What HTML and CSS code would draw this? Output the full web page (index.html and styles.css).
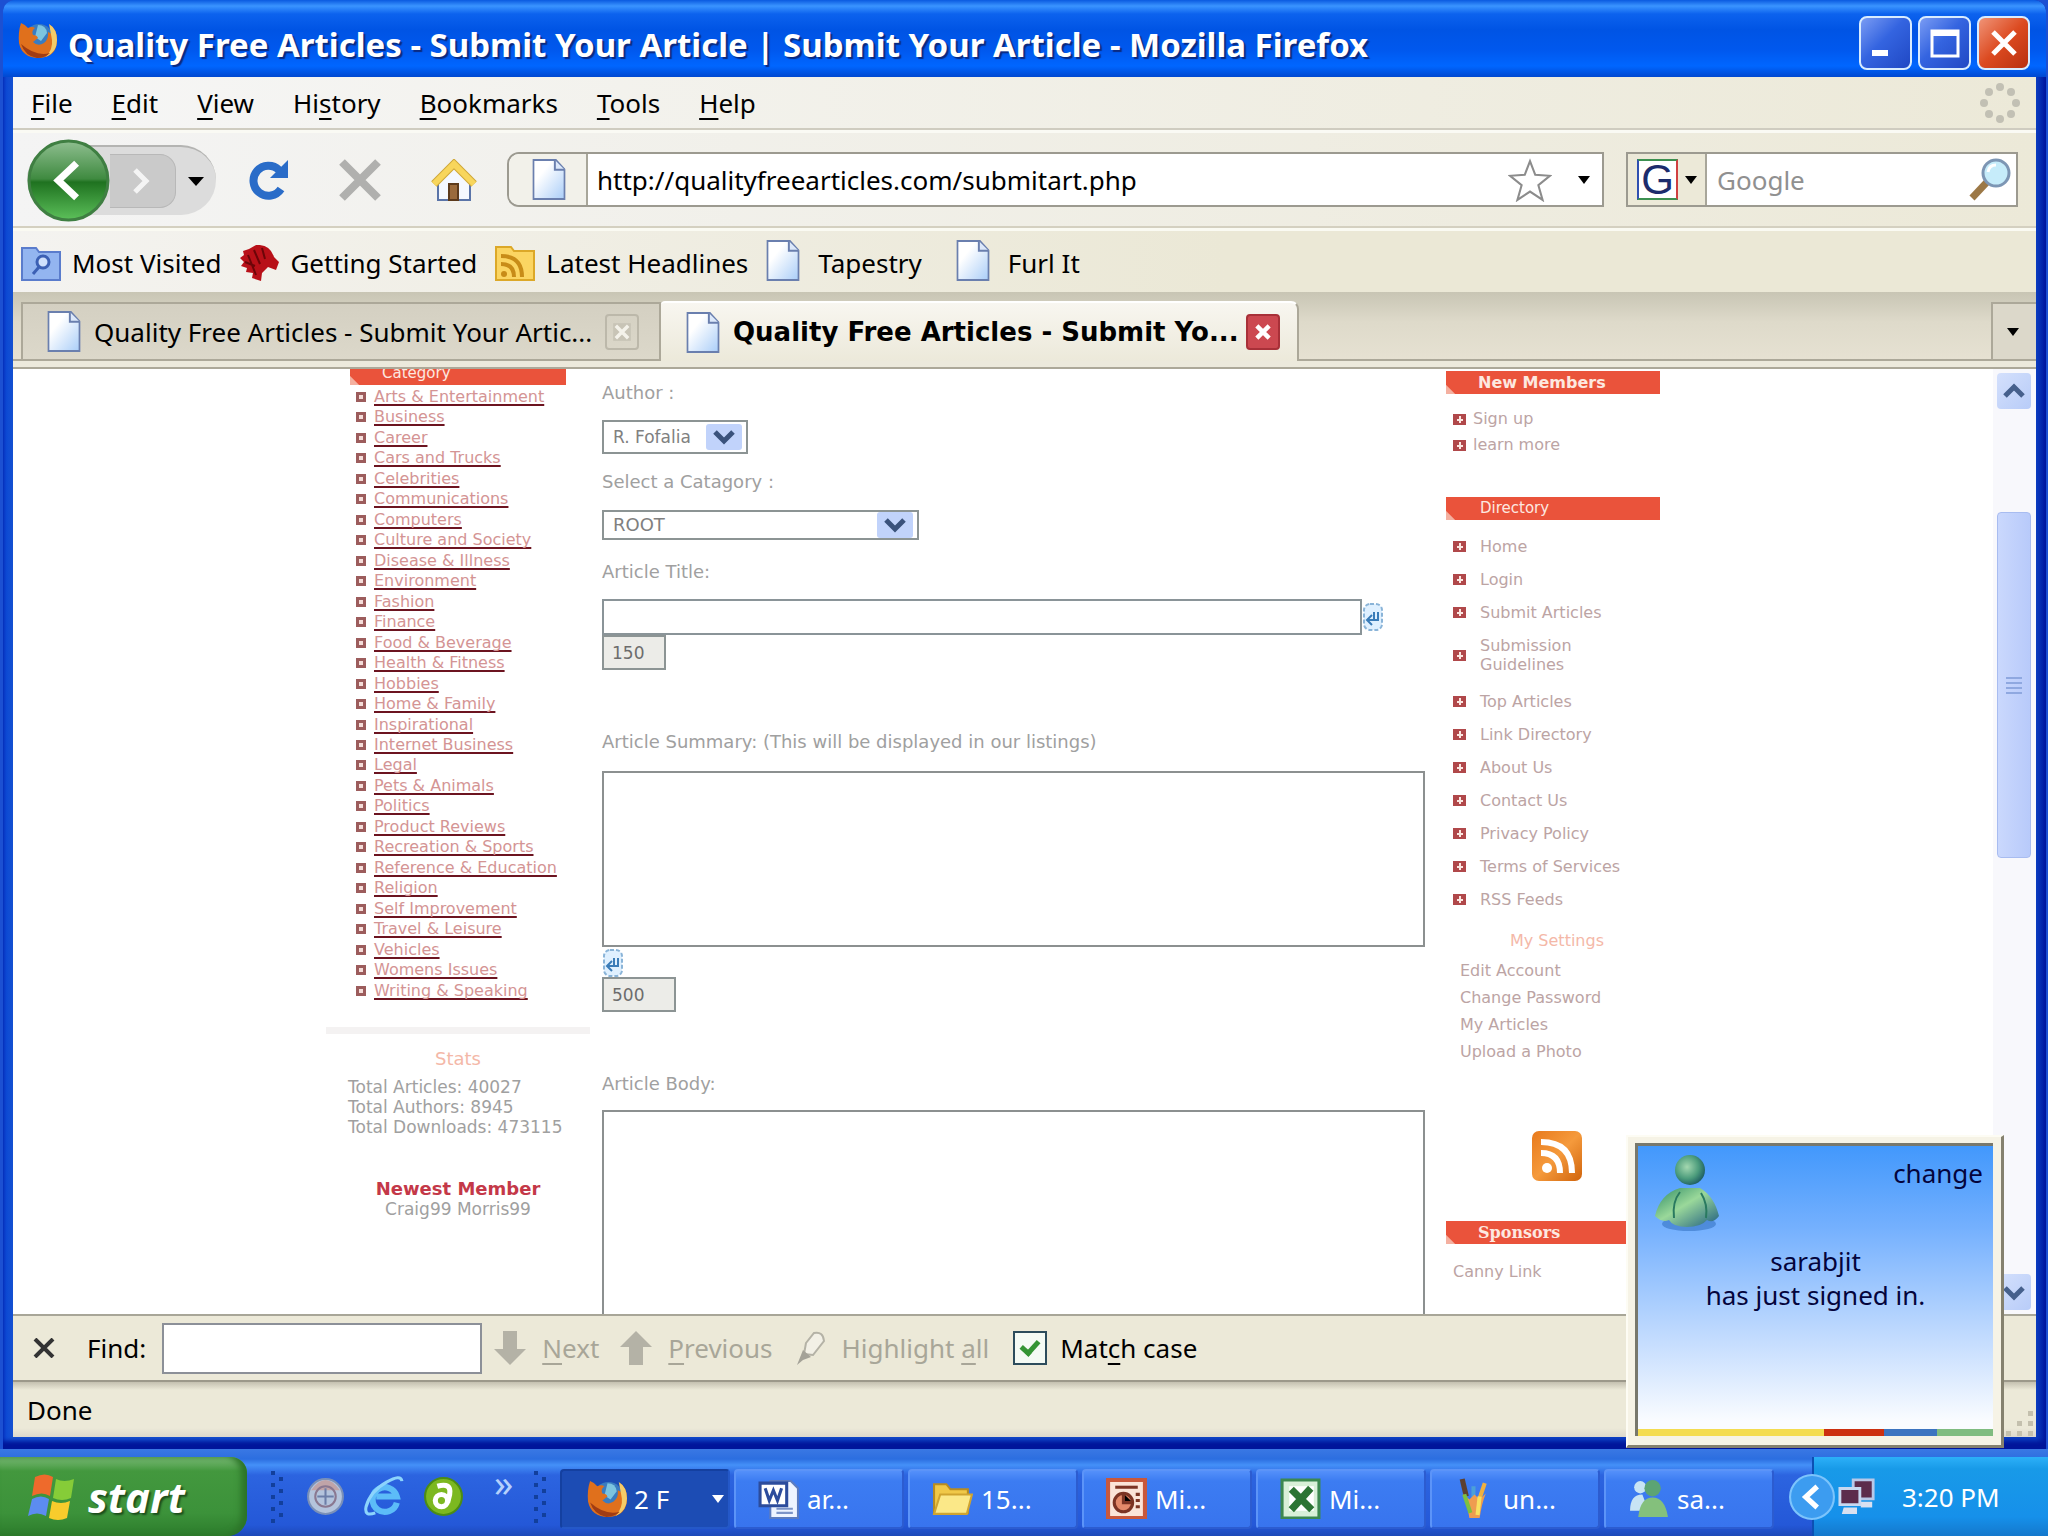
FILE: index.html
```html
<!DOCTYPE html>
<html lang="en">
<head>
    <meta charset="UTF-8">
    <meta name="viewport" content="width=device-width, initial-scale=1.0">
    <title>Quality Free Articles - Submit Your Article</title>
    <link rel="stylesheet" href="styles.css">
</head>
<body>

<!-- Shared icons -->
<svg class="defs" width="0" height="0">
    <defs>
        <linearGradient id="paper" x1="0" y1="0" x2="1" y2="1">
            <stop offset="0.3" stop-color="#fff"/><stop offset="1" stop-color="#a9cdf8"/>
        </linearGradient>
        <linearGradient id="green" x1="0" y1="0" x2="0" y2="1">
            <stop offset="0" stop-color="#8fbf90"/><stop offset="0.48" stop-color="#3f8a40"/>
            <stop offset="0.52" stop-color="#1f7220"/><stop offset="1" stop-color="#5cc05a"/>
        </linearGradient>
        <linearGradient id="orange" x1="0" y1="0" x2="1" y2="1">
            <stop offset="0" stop-color="#e87a1c"/><stop offset="0.5" stop-color="#f59a3c"/><stop offset="1" stop-color="#d0640c"/>
        </linearGradient>
        <linearGradient id="buddy" x1="0" y1="0" x2="1" y2="1">
            <stop offset="0" stop-color="#2c8a64"/><stop offset="0.45" stop-color="#9ad89a"/><stop offset="1" stop-color="#1c5a80"/>
        </linearGradient>
        <radialGradient id="head" cx="0.4" cy="0.4" r="0.65">
            <stop offset="0" stop-color="#a4d8b0"/><stop offset="0.6" stop-color="#4c9c7c"/><stop offset="1" stop-color="#1c5a60"/>
        </radialGradient>
        <symbol id="page" viewBox="0 0 34 42">
            <path d="M1 1h23l9 10v30H1z" fill="url(#paper)" stroke="#6a7fae" stroke-width="2"/>
            <path d="M23 1v10h10" fill="#dce8fa" stroke="#6a7fae" stroke-width="2"/>
        </symbol>
        <symbol id="fox" viewBox="0 0 40 40">
            <circle cx="21" cy="18" r="14" fill="#3a7cc0"/>
            <path d="M20 5q8 0 9 8l-6 8-6-4z" fill="#7cc4e0"/>
            <path d="M3 3q5 2 7 5 4-2 7 0-4 3-2 7 4 0 5 3l-5 4q5 5 11 1 5-4 4-11l4 2q1-6-3-10 8 5 8 16 0 17-18 18Q4 38 1 23 0 12 3 3z" fill="#e0701c"/>
            <path d="M31 4q8 5 8 16 0 12-11 17 7-8 6-17-1-6-3-16z" fill="#f4cc68"/>
            <path d="M3 24q4 12 16 14 8 0 13-5-14 4-29-9z" fill="#a03c14"/>
        </symbol>
        <symbol id="plus" viewBox="0 0 13 11">
            <path d="M0 0h13v11H0z" fill="#b0484a"/>
            <path d="M6 2h2v7H6zM4 5h6v2H4z" fill="#fbe6e0"/>
        </symbol>
        <symbol id="chevron" viewBox="0 0 36 26">
            <rect width="36" height="26" rx="3" fill="#c1d3fb"/>
            <path d="M9 8l9 9 9-9" fill="none" stroke="#3a527c" stroke-width="5"/>
        </symbol>
        <symbol id="enter" viewBox="0 0 20 28">
            <rect x="1" y="1" width="18" height="26" rx="6" fill="#dff0ff" stroke="#8ab4d8" stroke-width="2" stroke-dasharray="4 2"/>
            <path d="M15 9v8H5m4-5l-5 5 5 5M11 9v7" fill="none" stroke="#3a7cb8" stroke-width="2"/>
        </symbol>
        <symbol id="person" viewBox="0 0 66 78">
            <ellipse cx="35" cy="70" rx="27" ry="7" fill="#2a68b8" opacity="0.5"/>
            <path d="M1 62Q6 40 26 34h20q14 8 19 28-6 8-12 4-6 7-20 7t-18-7Q8 69 1 62z" fill="url(#buddy)"/>
            <circle cx="36" cy="16" r="15" fill="url(#head)"/>
            <path d="M20 64q-2-16 6-26M52 64q2-14-5-25" fill="none" stroke="#2a7a60" stroke-width="2"/>
        </symbol>
        <symbol id="grip" viewBox="0 0 16 54">
            <g fill="#123f9c">
                <path d="M2 1h4v4H2zM2 13h4v4H2zM2 25h4v4H2zM2 37h4v4H2zM2 49h4v4H2z"/>
                <path d="M10 7h4v4h-4zM10 19h4v4h-4zM10 31h4v4h-4zM10 43h4v4h-4z"/>
            </g>
        </symbol>
    </defs>
</svg>

<div class="window">
    <header class="titlebar">
        <svg class="title-icon" viewBox="0 0 40 40"><use href="#fox"/></svg>
        <h1>Quality Free Articles - Submit Your Article | Submit Your Article - Mozilla Firefox</h1>
        <div class="window-buttons">
            <button type="button" aria-label="Minimize"><svg viewBox="0 0 40 40"><path d="M6 27h16v6H6z" fill="#fff"/></svg></button>
            <button type="button" aria-label="Maximize"><svg viewBox="0 0 40 40"><path d="M7 8h26v25H7z" fill="none" stroke="#fff" stroke-width="3"/><path d="M6 7h28v6H6z" fill="#fff"/></svg></button>
            <button type="button" class="close" aria-label="Close"><svg viewBox="0 0 40 40"><path d="M9 9l22 22M31 9L9 31" stroke="#fff" stroke-width="5"/></svg></button>
        </div>
    </header>

    <div class="client">
        <nav class="menubar">
            <a href="#"><u>F</u>ile</a>
            <a href="#"><u>E</u>dit</a>
            <a href="#"><u>V</u>iew</a>
            <a href="#">Hi<u>s</u>tory</a>
            <a href="#"><u>B</u>ookmarks</a>
            <a href="#"><u>T</u>ools</a>
            <a href="#"><u>H</u>elp</a>
            <svg class="throbber" viewBox="0 0 40 40">
                <g fill="#c2c0b4">
                    <circle cx="20" cy="4" r="4"/><circle cx="31" cy="9" r="4"/><circle cx="36" cy="20" r="4"/><circle cx="31" cy="31" r="4"/>
                    <circle cx="20" cy="36" r="4"/><circle cx="9" cy="31" r="4"/><circle cx="4" cy="20" r="4"/><circle cx="9" cy="9" r="4"/>
                </g>
            </svg>
        </nav>

        <div class="toolbar">
            <div class="history">
                <button type="button" class="back" aria-label="Back">
                    <svg viewBox="0 0 82 82">
                        <circle cx="41" cy="41" r="39" fill="url(#green)" stroke="#3f7f42" stroke-width="3"/>
                        <path d="M49 24L31 41l18 17" fill="none" stroke="#fff" stroke-width="7"/>
                    </svg>
                </button>
                <button type="button" class="forward" aria-label="Forward">
                    <svg viewBox="0 0 26 30"><path d="M7 4l11 11L7 26" fill="none" stroke="#f4f4f4" stroke-width="5"/></svg>
                </button>
                <button type="button" class="drop" aria-label="Recent pages"><svg viewBox="0 0 16 10"><path d="M0 1h16L8 10z"/></svg></button>
            </div>
            <button type="button" class="tool" aria-label="Reload">
                <svg viewBox="0 0 42 42"><path d="M34 30a15 15 0 1 1-2-19" fill="none" stroke="#2a6cc8" stroke-width="8"/><path d="M41 1v18H23z" fill="#2a6cc8"/></svg>
            </button>
            <button type="button" class="tool" aria-label="Stop">
                <svg viewBox="0 0 42 42"><path d="M3 3l36 36M39 3L3 39" stroke="#b0b0ae" stroke-width="8"/></svg>
            </button>
            <button type="button" class="tool home" aria-label="Home">
                <svg viewBox="0 0 46 42">
                    <path d="M7 20L23 7l16 13v21H7z" fill="#f4f8ff" stroke="#5a74a8" stroke-width="2"/>
                    <path d="M18 25h9v16h-9z" fill="#9a6a3c" stroke="#5c3a1c" stroke-width="2"/>
                    <path d="M3 25L23 5l20 20" fill="none" stroke="#d0a838" stroke-width="8"/>
                    <path d="M3 25L23 5l20 20" fill="none" stroke="#f8d65c" stroke-width="6"/>
                </svg>
            </button>
            <form class="address">
                <span class="site-icon"><svg class="page-icon" viewBox="0 0 34 42"><use href="#page"/></svg></span>
                <input type="text" aria-label="Address" value="http://qualityfreearticles.com/submitart.php">
                <svg class="star" viewBox="0 0 42 42"><path d="M21 3l5 13 14 1-11 9 4 14-12-8-12 8 4-14L2 17l14-1z" fill="#fff" stroke="#8c8c8c" stroke-width="2"/></svg>
                <button type="button" class="drop" aria-label="Show history"><svg viewBox="0 0 16 10"><path d="M2 1h12L8 9z"/></svg></button>
            </form>
            <form class="search">
                <button type="button" class="engine" aria-label="Search engine">
                    <span class="g-logo">G</span>
                    <svg viewBox="0 0 16 10"><path d="M2 1h12L8 9z"/></svg>
                </button>
                <input type="text" aria-label="Search" placeholder="Google">
                <svg class="lens" viewBox="0 0 44 44">
                    <path d="M4 40l15-16" stroke="#9c7846" stroke-width="7"/>
                    <circle cx="28" cy="15" r="13" fill="#c6ecfa" stroke="#7d96b4" stroke-width="3"/>
                    <path d="M20 14q1-7 8-7" fill="none" stroke="#fff" stroke-width="3"/>
                </svg>
            </form>
        </div>

        <nav class="bookmarks">
            <a href="#">
                <svg class="folder" viewBox="0 0 40 36"><path d="M1 35V3h14l3 4h21v28z" fill="#93b5f0" stroke="#5a7ccc" stroke-width="2"/><circle cx="22" cy="17" r="6" fill="#cfe0fc" stroke="#3c60b4" stroke-width="3"/><path d="M18 22l-6 7" stroke="#3c60b4" stroke-width="3"/></svg>
                Most Visited
            </a>
            <a href="#">
                <svg class="folder" viewBox="0 0 40 36"><path d="M17 0q14-1 18 12l5 5-3 8-8-3-6 6-1 8-9-3 1-5-7-1 1-4-6-2 3-4-4-4 4-3-1-4 6-2z" fill="#b81018"/><path d="M9 10l8 20M15 5l6 14M6 17l10 4M23 3l3 11" stroke="#6c0508" stroke-width="2"/></svg>
                Getting Started
            </a>
            <a href="#">
                <svg class="folder" viewBox="0 0 40 36"><path d="M1 35V2h15l3 4h20v29z" fill="#fbd562" stroke="#dca828" stroke-width="2"/><circle cx="9" cy="29" r="3" fill="#c88c18"/><path d="M6 19q13 0 13 13M6 11q21 0 21 21" fill="none" stroke="#c88c18" stroke-width="4"/></svg>
                Latest Headlines
            </a>
            <a href="#" class="plain"><svg class="page-icon" viewBox="0 0 34 42"><use href="#page"/></svg>Tapestry</a>
            <a href="#" class="plain"><svg class="page-icon" viewBox="0 0 34 42"><use href="#page"/></svg>Furl It</a>
        </nav>

        <div class="tabs">
            <div class="tab">
                <svg class="page-icon" viewBox="0 0 34 42"><use href="#page"/></svg>
                <span>Quality Free Articles - Submit Your Artic...</span>
                <button type="button" class="tab-close" aria-label="Close tab"><svg viewBox="0 0 34 34"><path d="M7 7h20v20H7z" fill="#c8c4b6"/><path d="M10 10l14 14M24 10L10 24" stroke="#f4f2ea" stroke-width="4"/></svg></button>
            </div>
            <div class="tab active">
                <svg class="page-icon" viewBox="0 0 34 42"><use href="#page"/></svg>
                <span>Quality Free Articles - Submit Yo...</span>
                <button type="button" class="tab-close" aria-label="Close tab"><svg viewBox="0 0 34 34"><path d="M10 10l14 14M24 10L10 24" stroke="#fff" stroke-width="5"/></svg></button>
            </div>
            <button type="button" class="tab-list" aria-label="List all tabs"><svg viewBox="0 0 16 10"><path d="M2 1h12L8 9z"/></svg></button>
        </div>
        <div class="tab-edge"></div>

        <div class="viewport">
            <main class="site">
                <aside class="left">
                    <h2 class="bar">Category</h2>
                    <ul class="categories">
                        <li><a href="#">Arts &amp; Entertainment</a></li>
                        <li><a href="#">Business</a></li>
                        <li><a href="#">Career</a></li>
                        <li><a href="#">Cars and Trucks</a></li>
                        <li><a href="#">Celebrities</a></li>
                        <li><a href="#">Communications</a></li>
                        <li><a href="#">Computers</a></li>
                        <li><a href="#">Culture and Society</a></li>
                        <li><a href="#">Disease &amp; Illness</a></li>
                        <li><a href="#">Environment</a></li>
                        <li><a href="#">Fashion</a></li>
                        <li><a href="#">Finance</a></li>
                        <li><a href="#">Food &amp; Beverage</a></li>
                        <li><a href="#">Health &amp; Fitness</a></li>
                        <li><a href="#">Hobbies</a></li>
                        <li><a href="#">Home &amp; Family</a></li>
                        <li><a href="#">Inspirational</a></li>
                        <li><a href="#">Internet Business</a></li>
                        <li><a href="#">Legal</a></li>
                        <li><a href="#">Pets &amp; Animals</a></li>
                        <li><a href="#">Politics</a></li>
                        <li><a href="#">Product Reviews</a></li>
                        <li><a href="#">Recreation &amp; Sports</a></li>
                        <li><a href="#">Reference &amp; Education</a></li>
                        <li><a href="#">Religion</a></li>
                        <li><a href="#">Self Improvement</a></li>
                        <li><a href="#">Travel &amp; Leisure</a></li>
                        <li><a href="#">Vehicles</a></li>
                        <li><a href="#">Womens Issues</a></li>
                        <li><a href="#">Writing &amp; Speaking</a></li>
                    </ul>
                    <div class="divider"></div>
                    <h3 class="soft-title">Stats</h3>
                    <p class="stats">Total Articles: 40027<br>Total Authors: 8945<br>Total Downloads: 473115</p>
                    <p class="newest"><strong>Newest Member</strong><br>Craig99 Morris99</p>
                </aside>

                <form class="article">
                    <label for="author">Author :</label>
                    <div class="select author">
                        <select id="author"><option>R. Fofalia</option></select>
                        <svg viewBox="0 0 36 26"><use href="#chevron"/></svg>
                    </div>
                    <label for="category">Select a Catagory :</label>
                    <div class="select category">
                        <select id="category"><option>ROOT</option></select>
                        <svg viewBox="0 0 36 26"><use href="#chevron"/></svg>
                    </div>
                    <label for="title">Article Title:</label>
                    <div class="title-row">
                        <input type="text" id="title">
                        <svg class="enter" viewBox="0 0 20 28"><use href="#enter"/></svg>
                    </div>
                    <input type="text" class="count" aria-label="Title characters left" value="150" readonly>
                    <label for="summary" class="gap">Article Summary: (This will be displayed in our listings)</label>
                    <textarea id="summary" class="summary"></textarea>
                    <svg class="enter" viewBox="0 0 20 28"><use href="#enter"/></svg>
                    <input type="text" class="count wide" aria-label="Summary characters left" value="500" readonly>
                    <label for="body" class="gap">Article Body:</label>
                    <textarea id="body" class="body"></textarea>
                </form>

                <aside class="right">
                    <h2 class="bar">New Members</h2>
                    <ul class="join">
                        <li><svg viewBox="0 0 13 11"><use href="#plus"/></svg><a href="#">Sign up</a></li>
                        <li><svg viewBox="0 0 13 11"><use href="#plus"/></svg><a href="#">learn more</a></li>
                    </ul>
                    <h2 class="bar thin">Directory</h2>
                    <ul class="directory">
                        <li><svg viewBox="0 0 13 11"><use href="#plus"/></svg><a href="#">Home</a></li>
                        <li><svg viewBox="0 0 13 11"><use href="#plus"/></svg><a href="#">Login</a></li>
                        <li><svg viewBox="0 0 13 11"><use href="#plus"/></svg><a href="#">Submit Articles</a></li>
                        <li class="two-line"><svg viewBox="0 0 13 11"><use href="#plus"/></svg><a href="#">Submission<br>Guidelines</a></li>
                        <li><svg viewBox="0 0 13 11"><use href="#plus"/></svg><a href="#">Top Articles</a></li>
                        <li><svg viewBox="0 0 13 11"><use href="#plus"/></svg><a href="#">Link Directory</a></li>
                        <li><svg viewBox="0 0 13 11"><use href="#plus"/></svg><a href="#">About Us</a></li>
                        <li><svg viewBox="0 0 13 11"><use href="#plus"/></svg><a href="#">Contact Us</a></li>
                        <li><svg viewBox="0 0 13 11"><use href="#plus"/></svg><a href="#">Privacy Policy</a></li>
                        <li><svg viewBox="0 0 13 11"><use href="#plus"/></svg><a href="#">Terms of Services</a></li>
                        <li><svg viewBox="0 0 13 11"><use href="#plus"/></svg><a href="#">RSS Feeds</a></li>
                    </ul>
                    <h3 class="soft-title">My Settings</h3>
                    <ul class="settings">
                        <li><a href="#">Edit Account</a></li>
                        <li><a href="#">Change Password</a></li>
                        <li><a href="#">My Articles</a></li>
                        <li><a href="#">Upload a Photo</a></li>
                    </ul>
                    <a href="#" class="rss" aria-label="RSS">
                        <svg viewBox="0 0 50 50"><rect width="50" height="50" rx="7" fill="url(#orange)"/><circle cx="15" cy="37" r="5" fill="#fff"/><path d="M9 22q19 0 19 20M9 11q31 0 31 31" fill="none" stroke="#fff" stroke-width="6"/></svg>
                    </a>
                    <h2 class="bar serif">Sponsors</h2>
                    <a href="#" class="sponsor">Canny Link</a>
                </aside>
            </main>

            <div class="scrollbar">
                <button type="button" aria-label="Scroll up"><svg viewBox="0 0 34 34"><path d="M8 22l9-9 9 9" fill="none" stroke="#46608c" stroke-width="5"/></svg></button>
                <div class="track"><div class="thumb"><svg viewBox="0 0 16 18"><path d="M0 2h16M0 7h16M0 12h16M0 17h16" stroke="#8fa8e0" stroke-width="2"/></svg></div></div>
                <button type="button" aria-label="Scroll down"><svg viewBox="0 0 34 34"><path d="M8 13l9 9 9-9" fill="none" stroke="#46608c" stroke-width="5"/></svg></button>
            </div>
        </div>

        <form class="findbar">
            <button type="button" class="find-close" aria-label="Close find bar"><svg viewBox="0 0 20 20"><path d="M1 1l18 18M19 1L1 19" stroke="#333" stroke-width="4"/></svg></button>
            <label for="find">Find:</label>
            <input type="text" id="find">
            <button type="button" class="find-tool"><svg viewBox="0 0 32 34"><path d="M9 0h14v18h9L16 34 0 18h9z" fill="#b4b2a6"/></svg><span><u>N</u>ext</span></button>
            <button type="button" class="find-tool"><svg viewBox="0 0 32 34"><path d="M9 34h14V16h9L16 0 0 16h9z" fill="#b4b2a6"/></svg><span><u>P</u>revious</span></button>
            <button type="button" class="find-tool"><svg viewBox="0 0 32 34"><path d="M12 12L20 2q9-2 10 8L19 24l-9-1z" fill="#f2f0e6" stroke="#b4b2a6" stroke-width="2"/><path d="M9 19l8 7-8 3-6 5z" fill="#a4a298"/></svg><span>Highlight <u>a</u>ll</span></button>
            <input type="checkbox" id="matchcase" checked>
            <label for="matchcase">Mat<u>c</u>h case</label>
        </form>

        <footer class="statusbar">
            <span>Done</span>
            <svg viewBox="0 0 28 28"><path d="M22 2h5v5h-5zM11 12h5v5h-5zM22 12h5v5h-5zM0 22h5v5H0zM11 22h5v5h-5zM22 22h5v5h-5z" fill="#c4c0ae"/></svg>
        </footer>
    </div>
</div>

<div class="toast" role="status">
    <div class="toast-body">
        <div class="toast-top">
            <svg viewBox="0 0 66 78"><use href="#person"/></svg>
            <a href="#">change</a>
        </div>
        <p>sarabjit<br>has just signed in.</p>
        <div class="stripes"><i></i><i></i><i></i><i></i></div>
    </div>
</div>

<footer class="taskbar">
    <button type="button" class="start">
        <svg viewBox="0 0 48 46">
            <path d="M8 3q10-5 18 0l-3 19q-8-5-18 0z" fill="#ee6a2c"/>
            <path d="M29 5q8 4 18 0l-3 19q-9 4-18 0z" fill="#86cc38"/>
            <path d="M5 25q9-5 17 0l-3 17q-9-5-18 0z" fill="#5c8cf0"/>
            <path d="M25 27q9 4 18 0l-3 17q-9 4-18 0z" fill="#f8cc2c"/>
        </svg>
        start
    </button>
    <svg class="grip" viewBox="0 0 16 54"><use href="#grip"/></svg>
    <div class="quick">
        <a href="#" aria-label="Media"><svg viewBox="0 0 40 40"><circle cx="20" cy="20" r="17" fill="#b4c4dc" stroke="#7a90b8" stroke-width="2"/><path d="M6 14q14-20 28 0z" fill="#c0a4a8"/><circle cx="20" cy="20" r="10" fill="none" stroke="#8a7890" stroke-width="2"/><path d="M12 20h16M20 12v16" stroke="#6c7ea8" stroke-width="2"/></svg></a>
        <a href="#" aria-label="Internet Explorer"><svg viewBox="0 0 40 40"><path d="M32 26a12 12 0 1 1 0-6H12" fill="none" stroke="#5cbcf8" stroke-width="6"/><path d="M37 5Q36-2 22 6 6 15 2 30q-2 10 9 6" fill="none" stroke="#8cd4fc" stroke-width="3"/></svg></a>
        <a href="#" aria-label="Avant"><svg viewBox="0 0 40 40"><circle cx="20" cy="20" r="18" fill="#7cb820" stroke="#4c8c14" stroke-width="2"/><circle cx="18" cy="24" r="6" fill="none" stroke="#fff" stroke-width="5"/><path d="M14 10q14-4 12 8l-2 8" fill="none" stroke="#fff" stroke-width="5"/></svg></a>
    </div>
    <span class="more">»</span>
    <svg class="grip" viewBox="0 0 16 54"><use href="#grip"/></svg>
    <div class="tasks">
        <button type="button" class="pressed"><svg viewBox="0 0 40 40"><use href="#fox"/></svg><span>2 F</span><svg class="arrow" viewBox="0 0 12 8"><path d="M0 0h12L6 8z" fill="#fff"/></svg></button>
        <button type="button"><svg viewBox="0 0 40 40"><path d="M12 3h20l7 7v29H12z" fill="#eef4ff" stroke="#5c7cc0" stroke-width="2"/><path d="M18 30h16M18 34h16" stroke="#7c94c8" stroke-width="2"/><path d="M2 5h26v22H2z" fill="#fff" stroke="#2c4c9c" stroke-width="3"/><path d="M7 10l4 12 4-10 4 10 4-12" fill="none" stroke="#2c4c9c" stroke-width="3"/></svg><span>ar...</span></button>
        <button type="button"><svg viewBox="0 0 40 40"><path d="M2 34V6h12l4 5h17v23z" fill="#f0c848" stroke="#b88c20" stroke-width="2"/><path d="M8 16h31l-5 19H2z" fill="#fbe888" stroke="#d0a430" stroke-width="2"/></svg><span>15...</span></button>
        <button type="button"><svg viewBox="0 0 40 40"><path d="M2 2h36v37H2z" fill="#fbe4d8" stroke="#c8583c" stroke-width="4"/><path d="M9 9h22" stroke="#7c3424" stroke-width="3"/><circle cx="17" cy="24" r="9" fill="#e48a6a" stroke="#7c3424" stroke-width="3"/><path d="M17 15v9h9M29 16h4M29 22h4M29 28h4" stroke="#7c3424" stroke-width="3"/></svg><span>Mi...</span></button>
        <button type="button"><svg viewBox="0 0 40 40"><path d="M2 2h36v37H2z" fill="#d8f0d8" stroke="#3c8850" stroke-width="3"/><path d="M9 8h24v24H9z" fill="#fff"/><path d="M11 11l20 20M30 10L11 31" stroke="#2c7434" stroke-width="7"/></svg><span>Mi...</span></button>
        <button type="button"><svg viewBox="0 0 40 40"><path d="M12 18L8 1" stroke="#5c4030" stroke-width="5"/><path d="M19 20V8" stroke="#4ca0d8" stroke-width="4"/><path d="M25 20l5-15" stroke="#f0b040" stroke-width="4"/><path d="M9 15q4 10 6 24h10q2-14 6-24l-6 6-5-5-5 5z" fill="#ee9c50"/><path d="M10 16l6 18" stroke="#7cc040" stroke-width="4"/><path d="M25 18l-2 18" stroke="#f8e060" stroke-width="4"/></svg><span>un...</span></button>
        <button type="button"><svg viewBox="0 0 40 40"><circle cx="12" cy="9" r="6" fill="#c8e4f4"/><path d="M2 32q0-16 12-16l6 16z" fill="#c8e4f4"/><circle cx="24" cy="10" r="8" fill="#5ca474"/><path d="M10 38q2-19 14-19t15 19z" fill="#84c07c"/></svg><span>sa...</span></button>
    </div>
    <div class="tray">
        <button type="button" class="tray-toggle" aria-label="Show hidden icons"><svg viewBox="0 0 44 44"><circle cx="22" cy="22" r="21" fill="#3c9cf0" stroke="#7cc4fc" stroke-width="2"/><path d="M27 12L16 22l11 10" fill="none" stroke="#fff" stroke-width="5"/></svg></button>
        <svg class="network" viewBox="0 0 40 40"><path d="M16 2h21v20H16z" fill="#5c2c4c" stroke="#b8c8e8" stroke-width="3"/><path d="M24 25h12v6H24z" fill="#d8e0f0"/><path d="M2 11h21v17H2z" fill="#5c2c4c" stroke="#c8d8f0" stroke-width="3"/><path d="M6 31h14v7H4z" fill="#d8e0f0"/></svg>
        <time>3:20 PM</time>
    </div>
</footer>

</body>
</html>
```
FILE: styles.css
```css
* {
    box-sizing: border-box;
}
body {
    margin: 0;
    height: 100vh;
    display: flex;
    flex-direction: column;
    overflow: hidden;
    background-color: #1c50d2;
    font-family: "Noto Sans", "Open Sans", sans-serif;
    font-size: 26px;
    line-height: 34px;
    color: #000;
}
a {
    color: inherit;
    text-decoration: none;
}
u {
    text-underline-offset: 5px;
    text-decoration-thickness: 2px;
}
button, input, select, textarea {
    font: inherit;
    color: inherit;
    margin: 0;
    padding: 0;
    border: 0;
    border-radius: 0;
    background: none;
}
h1, h2, h3, p, ul {
    margin: 0;
    padding: 0;
}
ul {
    list-style: none;
}
svg {
    display: block;
    flex: none;
}
.defs {
    position: absolute;
}

/* Window frame */
.window {
    flex: 1;
    min-height: 0;
    display: flex;
    flex-direction: column;
    margin: 0 2px 0 3px;
    padding: 0 10px 12px;
    border-radius: 12px 12px 0 0;
    background: linear-gradient(90deg, #0a48d8, #1450d0 10px, #0a3cc0 calc(100% - 10px), #0018a0);
    box-shadow: inset 0 -8px 4px #00159a;
}
.titlebar {
    display: flex;
    align-items: center;
    height: 77px;
    margin: 0 -10px;
    padding: 12px 16px 0 15px;
    border-radius: 12px 12px 0 0;
    background: linear-gradient(#0a5ae0, #3a94ff 6px, #0c62ee 14px, #0054e4 30px, #0058ee 50px, #0066ff 66px, #0048d0);
}
.title-icon {
    width: 40px;
    height: 40px;
    margin-top: -10px;
}
.titlebar h1 {
    flex: 1;
    margin-left: 10px;
    font-size: 33px;
    font-weight: bold;
    color: #fff;
    text-shadow: 2px 2px 1px #0a2a80;
    white-space: nowrap;
}
.window-buttons {
    display: flex;
    gap: 6px;
    margin: -4px 0 0;
}
.window-buttons button {
    width: 53px;
    height: 54px;
    display: grid;
    place-items: center;
    border: 2px solid #d8ecff;
    border-radius: 8px;
    background: linear-gradient(135deg, #7a9cf4, #3464e0 45%, #2048c4);
}
.window-buttons .close {
    background: linear-gradient(135deg, #f09478, #dc4a20 50%, #b83010);
}
.window-buttons svg {
    width: 40px;
    height: 40px;
}
.client {
    flex: 1;
    min-height: 0;
    display: flex;
    flex-direction: column;
    background-color: #ece9d8;
}

/* Menu */
.menubar {
    display: flex;
    align-items: center;
    gap: 39px;
    height: 53px;
    padding: 0 16px 0 18px;
    border-bottom: 2px solid #cfccc0;
    background: linear-gradient(90deg, #f6f6f6, #ece9d8);
}
.throbber {
    width: 40px;
    height: 40px;
    margin-left: auto;
}

/* Navigation toolbar */
.toolbar {
    display: flex;
    align-items: center;
    height: 98px;
    padding: 0 18px 0 14px;
    border-top: 3px solid #fafaf4;
    border-bottom: 2px solid #d4d0c0;
    background: linear-gradient(90deg, #f4f4f4, #ece9d8);
}
.history {
    display: flex;
    align-items: center;
    height: 70px;
    padding-right: 8px;
    margin-right: 31px;
    border-top: 2px solid #b4b4b2;
    border-radius: 36px;
    background-color: #dcdcdc;
}
.back svg {
    width: 83px;
    height: 83px;
}
.forward {
    width: 66px;
    height: 54px;
    padding-left: 18px;
    border: 1px solid #b8b8b8;
    border-left: 0;
    border-radius: 0 16px 16px 0;
    background-color: #cacaca;
}
.forward svg {
    width: 26px;
    height: 30px;
}
.drop {
    width: 32px;
    height: 40px;
    padding-left: 12px;
}
.drop svg, .engine svg, .tab-list svg {
    width: 16px;
    height: 10px;
}
.tool {
    margin-right: 50px;
}
.tool svg {
    width: 42px;
    height: 42px;
}
.home {
    margin-right: 30px;
}
.home svg {
    width: 46px;
}
.address, .search {
    display: flex;
    align-items: center;
    height: 55px;
    border: 2px solid #9c9a90;
    background-color: #fff;
}
.address {
    flex: 1;
    min-width: 0;
    padding-right: 6px;
    border-radius: 12px 0 0 12px;
    overflow: hidden;
}
.address input {
    flex: 1;
    min-width: 0;
    padding-left: 9px;
}
.site-icon {
    display: flex;
    align-items: center;
    height: 100%;
    padding: 0 20px 0 23px;
    border-right: 2px solid #a8a69a;
    background-color: #f2f1ea;
}
.page-icon {
    width: 34px;
    height: 41px;
}
.star {
    width: 44px;
    height: 44px;
    margin-right: 12px;
}
.search {
    width: 392px;
    margin-left: 22px;
    padding-right: 4px;
}
.engine {
    display: flex;
    align-items: center;
    gap: 5px;
    height: 100%;
    padding: 0 6px 0 9px;
    border-right: 2px solid #a8a69a;
    background-color: #ece9d8;
}
.g-logo {
    width: 41px;
    height: 41px;
    border: 2px solid;
    border-color: #3c9050 #d04040 #3c9050 #3050b0;
    background-color: #fff;
    font: 42px/38px "Liberation Sans", sans-serif;
    color: #1c2c6c;
}
.search input {
    flex: 1;
    min-width: 0;
    padding-left: 10px;
}
.search input::placeholder {
    color: #909090;
    opacity: 1;
}
.lens {
    width: 44px;
    height: 44px;
}

/* Bookmarks */
.bookmarks {
    display: flex;
    align-items: center;
    gap: 18px;
    height: 64px;
    padding: 3px 8px 0;
    border-top: 3px solid #fafaf2;
    background: linear-gradient(90deg, #f4f3f0, #ebe8d6 60%);
}
.bookmarks a {
    display: flex;
    align-items: center;
    gap: 11px;
    white-space: nowrap;
}
.bookmarks .plain {
    gap: 18px;
    margin-right: 16px;
}
.bookmarks .plain .page-icon {
    margin-top: -5px;
}
.folder {
    width: 40px;
    height: 36px;
}

/* Tabs */
.tabs {
    display: flex;
    align-items: flex-end;
    height: 69px;
    padding-left: 8px;
    border-bottom: 2px solid #aca899;
    background: linear-gradient(#c8c5b4, #dedaca 30px, #e6e1d2);
}
.tab {
    display: flex;
    align-items: center;
    width: 640px;
    height: 57px;
    padding: 0 20px 0 24px;
    border: 2px solid #aca899;
    border-bottom: 0;
    background: linear-gradient(#d4d0c2, #dcd8ca);
    white-space: nowrap;
}
.tab span {
    flex: 1;
    min-width: 0;
    margin-left: 13px;
    overflow: hidden;
}
.tab-close {
    width: 34px;
    height: 36px;
    border: 2px solid #bcb8aa;
    border-radius: 4px;
}
.active {
    width: 638px;
    height: 60px;
    margin-bottom: -2px;
    padding: 0 17px 0 25px;
    border-left: 0;
    border-top-color: #fff;
    border-radius: 4px 8px 0 0;
    background: linear-gradient(#f8f6f0, #ece9da);
    font-family: "DejaVu Sans", sans-serif;
    font-weight: bold;
}
.active .tab-close {
    border-color: #a83038;
    background-color: #cc4850;
}
.tab-list {
    width: 45px;
    height: 57px;
    margin-left: auto;
    padding-left: 12px;
    border: 2px solid #aca899;
    border-width: 2px 0 0 2px;
    background-color: #dcd8ca;
}
.tab-edge {
    height: 8px;
    border-bottom: 2px solid #aca899;
    background-color: #ece9dc;
}

/* Web page */
.viewport {
    flex: 1;
    min-height: 0;
    display: flex;
    overflow: hidden;
    background-color: #fff;
    font-family: "DejaVu Sans", sans-serif;
    font-size: 16px;
    line-height: 20px;
    color: #a0a0a0;
}
.site {
    flex: 1;
    max-width: 1354px;
    margin: 0 auto;
    display: grid;
    grid-template-columns: 264px 1fr 214px;
    align-items: start;
    padding-right: 20px;
}
.bar {
    height: 23px;
    padding-left: 32px;
    background: linear-gradient(45deg, #f4b0a0 6px, #ea533b 7px);
    font-size: 16px;
    line-height: 23px;
    color: #fde8e0;
}
.thin {
    font-size: 15px;
    font-weight: normal;
    padding-left: 34px;
}
.serif {
    font-family: "DejaVu Serif", serif;
}
.left .bar {
    margin: -7px 24px 0;
    font-size: 15px;
    font-weight: normal;
}
.categories {
    display: flex;
    flex-direction: column;
    justify-content: space-between;
    height: 614px;
    margin: 2px 0 0 30px;
}
.categories li {
    display: flex;
    align-items: center;
    gap: 8px;
    height: 20px;
    white-space: nowrap;
}
.categories li::before {
    content: "";
    box-sizing: border-box;
    width: 10px;
    height: 10px;
    border: 3px solid #9c5c5c;
    background-color: #f4dcd8;
}
.categories a {
    color: #d49494;
    text-decoration: underline #6c1420 2px;
    text-underline-offset: 2px;
    text-decoration-skip-ink: none;
}
.divider {
    height: 7px;
    margin-top: 26px;
    background-color: #f4f2f2;
}
.soft-title {
    font-size: 16px;
    font-weight: normal;
    text-align: center;
    color: #f4b8a8;
}
.left .soft-title {
    margin-top: 15px;
    font-size: 18px;
}
.stats {
    margin: 8px 0 0 22px;
    white-space: nowrap;
    font-size: 17px;
    line-height: 20px;
}
.newest {
    margin-top: 42px;
    text-align: center;
    font-size: 17px;
}
.newest strong {
    font-size: 18px;
    color: #c43848;
}

/* Article form */
.article {
    display: flex;
    flex-direction: column;
    align-items: flex-start;
    padding: 14px 21px 0 12px;
    font-size: 18px;
}
.article label {
    height: 20px;
}
.select {
    display: flex;
    align-items: center;
    border: 2px solid #8c9494;
    padding: 0 3px 0 9px;
    color: #808080;
}
.select select {
    flex: 1;
    min-width: 0;
    appearance: none;
}
.select svg {
    width: 38px;
    height: 26px;
}
.author {
    width: 146px;
    height: 34px;
    margin: 17px 0 18px;
    font-size: 17px;
}
.category {
    width: 317px;
    height: 30px;
    margin: 18px 0 22px;
}
.title-row {
    display: flex;
    align-items: center;
    align-self: stretch;
    margin-top: 17px;
}
.title-row input {
    flex: 1;
    max-width: 760px;
    height: 36px;
    border: 2px solid #8a9498;
}
.enter {
    width: 22px;
    height: 28px;
}
.article .count {
    width: 64px;
    height: 35px;
    padding: 0 8px;
    border: 2px solid #8c9494;
    background-color: #ecece8;
    font-size: 17px;
    color: #6c6c6c;
}
.article .wide {
    width: 74px;
}
.article .gap {
    margin: 62px 0 19px;
}
.article textarea {
    align-self: stretch;
    border: 2px solid #8c9090;
    resize: none;
}
.summary {
    height: 176px;
    margin-bottom: 2px;
}
.body {
    height: 320px;
}
.article .wide + .gap {
    margin-bottom: 16px;
}

/* Right column */
.right {
    color: #bca4a4;
}
.right .bar {
    margin-top: 2px;
}
.right li {
    display: flex;
    align-items: center;
    white-space: nowrap;
}
.right li svg {
    width: 13px;
    height: 11px;
}
.join {
    display: grid;
    gap: 6px;
    padding: 15px 0 40px 7px;
}
.join li {
    gap: 7px;
}
.directory {
    display: grid;
    gap: 14px;
    padding: 17px 0 0 7px;
}
.directory li {
    gap: 14px;
    line-height: 19px;
}
.directory .two-line {
    padding-bottom: 4px;
}
.right .soft-title {
    margin-top: 22px;
    padding-left: 8px;
}
.settings {
    display: grid;
    gap: 7px;
    margin: 10px 0 0 14px;
}
.rss {
    display: block;
    width: 50px;
    margin: 69px 0 40px 86px;
}
.rss svg {
    width: 50px;
    height: 50px;
}
.sponsor {
    display: block;
    margin: 18px 0 0 7px;
}

/* Scrollbar */
.scrollbar {
    display: flex;
    flex-direction: column;
    width: 43px;
    padding: 4px 5px 4px 4px;
    background-color: #f8f8fc;
}
.scrollbar button {
    width: 34px;
    height: 36px;
    border-radius: 4px;
    background: linear-gradient(135deg, #d4e0fc, #b8ccf8);
}
.track {
    flex: 1;
    padding-top: 103px;
}
.thumb {
    display: grid;
    place-items: center;
    height: 346px;
    border: 1px solid #a8bcf0;
    border-radius: 4px;
    background: linear-gradient(90deg, #cad8fd, #b8cafa);
}
.thumb svg {
    width: 16px;
    height: 18px;
}

/* Find bar and status bar */
.findbar {
    display: flex;
    align-items: center;
    height: 68px;
    padding: 0 20px;
    border-top: 2px solid #a8a698;
    border-bottom: 2px solid #9c988a;
    background-color: #ece9d8;
    white-space: nowrap;
}
.find-close svg {
    width: 22px;
    height: 20px;
}
.find-close + label {
    margin: 0 16px 0 32px;
}
.findbar input[type="text"] {
    width: 320px;
    height: 51px;
    border: 2px solid #8c9098;
    background-color: #fff;
}
.find-tool {
    display: flex;
    align-items: center;
    gap: 16px;
    margin-left: 12px;
    color: #a8a698;
}
.find-tool + .find-tool {
    margin-left: 21px;
}
.find-tool svg {
    width: 32px;
    height: 36px;
}
.findbar input[type="checkbox"] {
    appearance: none;
    display: grid;
    place-items: center;
    width: 34px;
    height: 34px;
    margin: 0 13px 0 24px;
    border: 2px solid #2c4c5c;
    background-color: #f4faf4;
}
.findbar input[type="checkbox"]:checked::before {
    content: "";
    width: 7px;
    height: 13px;
    margin-top: -4px;
    border: solid #349434;
    border-width: 0 5px 5px 0;
    transform: rotate(42deg);
}
.statusbar {
    display: flex;
    justify-content: space-between;
    align-items: center;
    height: 55px;
    padding: 0 2px 0 14px;
    background: linear-gradient(#c4c0b0, #ece9d8 8px, #ece9d8 46px, #dcd8cc);
}
.statusbar svg {
    width: 28px;
    height: 28px;
    align-self: flex-end;
}

/* Messenger notification, sits over the window */
.toast {
    position: absolute;
    right: 44px;
    bottom: 88px;
    width: 378px;
    height: 313px;
    padding: 6px 8px 9px 7px;
    border: 2px solid #fdfcf4;
    border-right: 3px solid #85816f;
    border-bottom: 3px solid #85816f;
    background-color: #f6f3e6;
}
.toast-body {
    display: flex;
    flex-direction: column;
    height: 100%;
    border: solid #78786c;
    border-width: 3px 0 0 3px;
    background: linear-gradient(#4298fc, #74b0fe 28%, #c0dafe 65%, #fafcff 95%);
    color: #04043c;
}
.toast-top {
    display: flex;
    justify-content: space-between;
    padding: 8px 10px 0 16px;
}
.toast-top svg {
    width: 66px;
    height: 78px;
}
.toast-top a {
    padding-top: 2px;
}
.toast p {
    flex: 1;
    margin-top: 12px;
    text-align: center;
}
.stripes {
    display: grid;
    grid-template-columns: 184fr 60fr 52fr 56fr;
    height: 7px;
}
.stripes i {
    background-color: #f4dc50;
}
.stripes i:nth-child(2) {
    background-color: #cc3010;
}
.stripes i:nth-child(3) {
    background-color: #3c74c0;
}
.stripes i:nth-child(4) {
    background-color: #80bc80;
}

/* Taskbar */
.taskbar {
    display: flex;
    align-items: center;
    height: 87px;
    padding-top: 8px;
    background: linear-gradient(#3a78e4, #2c6ee0 10px, #4490f8 16px, #2c64e0 26px, #2458d8 76px, #1c48b8);
    color: #fff;
    white-space: nowrap;
}
.start {
    display: flex;
    align-items: center;
    gap: 13px;
    width: 247px;
    height: 100%;
    padding-left: 27px;
    border-radius: 0 16px 20px 0;
    background: linear-gradient(#7cbc78, #43983e 14px, #3c923a 56px, #2c7c2c);
    box-shadow: inset -6px 0 6px #2c7428;
    font: italic bold 42px/40px "Open Sans", "Noto Sans", sans-serif;
    text-shadow: 2px 2px 2px #1c4c1c;
}
.start svg {
    width: 48px;
    height: 46px;
}
.grip {
    width: 16px;
    height: 54px;
    margin-left: 22px;
}
.quick {
    display: flex;
    gap: 18px;
    margin-left: 20px;
}
.quick svg {
    width: 41px;
    height: 41px;
}
.more {
    width: 24px;
    margin: -30px 0 0 30px;
    font-size: 38px;
    color: #b4d0fc;
}
.taskbar .more + .grip {
    margin-left: 14px;
}
.tasks {
    flex: 1;
    display: grid;
    grid-template-columns: repeat(7, 1fr);
    gap: 4px;
    margin: 4px 38px 0 12px;
}
.tasks button {
    display: flex;
    align-items: center;
    gap: 8px;
    min-width: 0;
    height: 60px;
    padding-left: 22px;
    border: 2px solid #5c94f8;
    border-right-color: #2c5cd0;
    border-bottom-color: #2c5cd0;
    border-radius: 4px;
    background: linear-gradient(#5490fa, #3c7cf2 10px, #3874ee);
}
.tasks svg {
    width: 41px;
    height: 41px;
}
.tasks .pressed {
    padding-left: 25px;
    gap: 6px;
    border-color: #1440a0 #2458c8 #2458c8 #1440a0;
    background: #1c4cb4;
}
.tasks .pressed .arrow {
    width: 12px;
    height: 8px;
    margin-left: auto;
    margin-right: 4px;
}
.tray {
    display: flex;
    align-items: center;
    width: 236px;
    height: 100%;
    border-left: 2px solid #0c50b4;
    background: linear-gradient(#2cb0f8, #189ae8 12px, #1690ea 60px, #1478cc);
}
.tray-toggle {
    margin-left: -25px;
}
.tray-toggle svg {
    width: 46px;
    height: 46px;
}
.network {
    width: 38px;
    height: 40px;
    margin: 0 26px 0 3px;
}
```
